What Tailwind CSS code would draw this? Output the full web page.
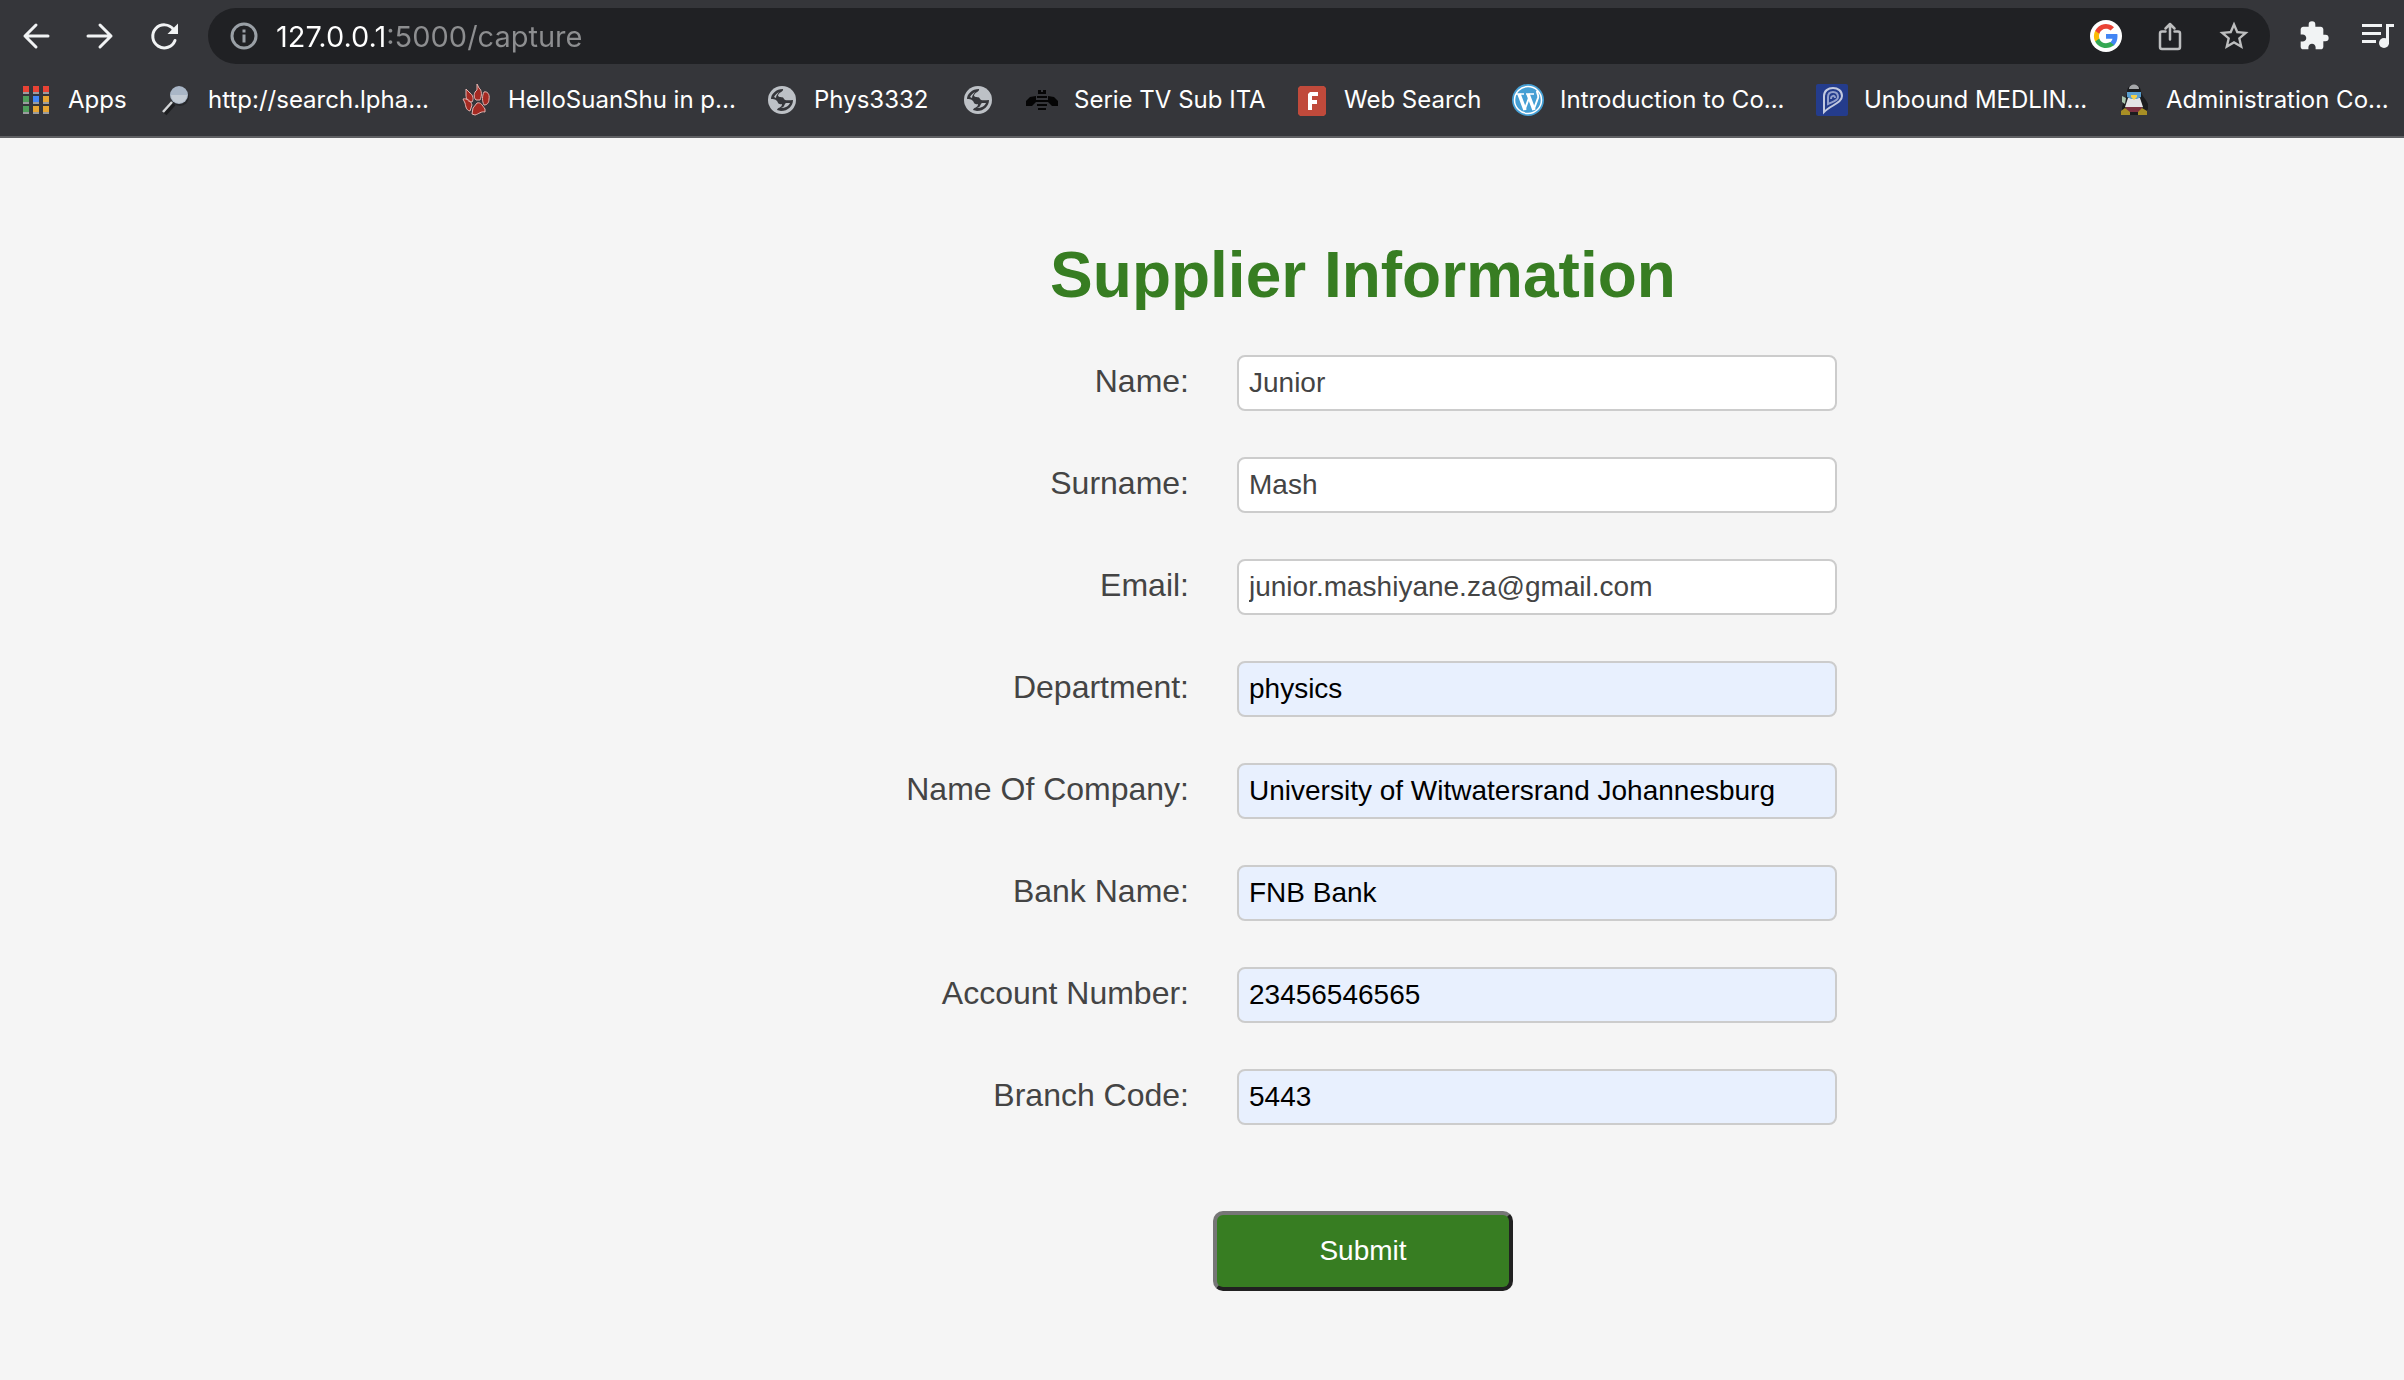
<!DOCTYPE html>
<html lang="en">
<head>
<meta charset="utf-8">
<title>Supplier Information</title>
<script src="https://cdn.jsdelivr.net/npm/@tailwindcss/browser@4"></script>
</head>
<body class="min-h-screen overflow-x-hidden bg-[#f5f5f5] font-['Liberation_Sans',Arial,sans-serif]">

<header class="border-b-2 border-[#5f6063] bg-[#35363a] pt-2 font-[Inter,sans-serif] text-white">
  <div class="flex h-14 items-center pl-5">
    <button aria-label="Back" class="mr-8 size-8 shrink-0">
      <svg viewBox="0 0 32 32" class="size-8" fill="none" stroke="#f1f3f4" stroke-width="3" stroke-linecap="round" stroke-linejoin="round"><path d="M28 16H5M16 5 5 16l11 11"/></svg>
    </button>
    <button aria-label="Forward" class="mr-8 size-8 shrink-0">
      <svg viewBox="0 0 32 32" class="size-8" fill="none" stroke="#f1f3f4" stroke-width="3" stroke-linecap="round" stroke-linejoin="round"><path d="M4 16h23M16 5l11 11-11 11"/></svg>
    </button>
    <button aria-label="Reload" class="mr-7 size-8 shrink-0">
      <svg viewBox="0 0 32 32" class="size-8" fill="none" stroke="#f1f3f4" stroke-width="3" stroke-linecap="round"><path d="M25.500 9.500A11.500 11.500 0 1 0 27 20.500"/><path d="M30 3.500V14H19.500z" fill="#f1f3f4" stroke="none"/></svg>
    </button>
    <div class="flex h-14 min-w-0 grow items-center rounded-full bg-[#202124] pl-[22px]">
      <svg viewBox="0 0 28 28" class="mr-[18px] size-7 shrink-0" fill="none" stroke="#9aa0a6" stroke-width="3"><circle cx="14" cy="14" r="12"/><path d="M14 12.500v8M14 7.500v3"/></svg>
      <input aria-label="Address" value="127.0.0.1:5000/capture" class="h-14 min-w-0 grow bg-[linear-gradient(90deg,#fff_112px,#8d8e90_112px)] bg-clip-text text-[29px] text-transparent outline-none">
      <button aria-label="Google" class="mr-8 size-8 shrink-0">
        <svg viewBox="0 0 32 32" class="size-8"><circle cx="16" cy="16" r="16" fill="#fff"/><g transform="translate(4 4)"><path fill="#4285f4" d="M23.500 12.300c0-.9-.1-1.500-.2-2.200H12v4.600h6.500c-.3 1.500-1.200 2.800-2.500 3.700v3h4c2.300-2.200 3.500-5.300 3.500-9.100z"/><path fill="#34a853" d="M12 24c3.200 0 6-1.100 8-2.900l-4-3c-1.100.7-2.500 1.200-4 1.200-3.100 0-5.800-2.100-6.700-4.900H1.200v3.100C3.200 21.400 7.300 24 12 24z"/><path fill="#fbbc05" d="M5.300 14.400a7.200 7.200 0 0 1 0-4.600V6.700H1.200a12 12 0 0 0 0 10.800z"/><path fill="#ea4335" d="M12 4.800c1.800 0 3.300.6 4.600 1.800L20 3.200A12 12 0 0 0 1.200 6.700l4.100 3.100c.9-2.900 3.600-5 6.700-5z"/></g></svg>
      </button>
      <button aria-label="Share" class="mr-8 size-8 shrink-0">
        <svg viewBox="0 0 32 32" class="size-8" fill="none" stroke="#bdbebf" stroke-width="2.500" stroke-linejoin="round" stroke-linecap="round"><path d="M11.500 11.500H8a2 2 0 0 0-2 2V27a2 2 0 0 0 2 2h16a2 2 0 0 0 2-2V13.500a2 2 0 0 0-2-2h-3.500M16 19.500V4M11.500 8.500 16 4l4.500 4.500"/></svg>
      </button>
      <button aria-label="Bookmark this page" class="mr-5 size-8 shrink-0">
        <svg viewBox="1 1 22 22" class="size-8" fill="#bdbebf"><path d="M22 9.240l-7.190-.62L12 2 9.190 8.630 2 9.240l5.460 4.730L5.820 21 12 17.270 18.180 21l-1.630-7.030L22 9.240zM12 15.400l-3.760 2.270 1-4.280-3.320-2.880 4.380-.38L12 6.100l1.710 4.040 4.380.38-3.320 2.880 1 4.280L12 15.400z"/></svg>
      </button>
    </div>
    <button aria-label="Extensions" class="ml-7 size-8 shrink-0">
      <svg viewBox="0 0 24 24" class="size-8" fill="#f1f3f4"><path d="M20.500 11H19V7c0-1.100-.9-2-2-2h-4V3.500a2.500 2.500 0 0 0-5 0V5H4c-1.100 0-1.990.9-1.990 2v3.800H3.500c1.490 0 2.700 1.210 2.700 2.700s-1.210 2.700-2.700 2.700H2V20c0 1.100.9 2 2 2h3.800v-1.500c0-1.490 1.210-2.700 2.700-2.700 1.490 0 2.700 1.210 2.700 2.700V22H17c1.100 0 2-.9 2-2v-4h1.500a2.500 2.500 0 0 0 0-5z"/></svg>
    </button>
    <button aria-label="Media controls" class="mr-2.5 ml-7 h-8 w-9 shrink-0">
      <svg viewBox="0 0 36 32" class="h-8 w-9" fill="none" stroke="#f1f3f4" stroke-width="3"><path d="M4 5.500h20M4 13.500h19M4 21.500h14M29.500 24V5.500H36"/><circle cx="26" cy="23" r="5" fill="#f1f3f4" stroke="none"/></svg>
    </button>
  </div>

  <nav aria-label="Bookmarks" class="flex h-[72px] items-start overflow-hidden pt-5 pl-5 text-2xl leading-8 whitespace-nowrap">
    <a href="#" class="flex w-[140px] shrink-0 gap-4">
      <svg viewBox="0 0 32 32" class="size-8 shrink-0"><path fill="#9a9c9e" d="M3 8h6v2H3zM13 8h6v2h-6zM23 8h6v2h-6zM3 18h6v2H3zM13 18h6v2h-6zM23 18h6v2h-6zM3 28h6v2H3zM13 28h6v2h-6zM23 28h6v2h-6z"/><path fill="#e94335" d="M3 2h6v6H3zM13 2h6v6h-6zM23 2h6v6h-6z"/><path fill="#4f9f5b" d="M3 12h6v6H3zM3 22h6v6H3z"/><path fill="#4285f4" d="M13 12h6v6h-6z"/><path fill="#e8a632" d="M23 12h6v6h-6zM13 22h6v6h-6zM23 22h6v6h-6z"/></svg>
      Apps</a>
    <a href="#" class="flex w-[300px] shrink-0 gap-4">
      <svg viewBox="0 0 32 32" class="size-8 shrink-0"><path d="M5 30 14 20" stroke="#1d1e20" stroke-width="4"/><circle cx="20" cy="13" r="9" fill="#27282b"/><path d="M3 28 12 18" stroke="#d4d6d8" stroke-width="2.500"/><circle cx="19" cy="11" r="9" fill="#a9b6c6"/><path d="M11 11a8 8 0 0 0 16 0z" fill="#c3cbd4"/></svg>
      http://search.lpha...</a>
    <a href="#" class="flex w-[306px] shrink-0 gap-4">
      <svg viewBox="0 0 32 32" class="size-8 shrink-0" fill="#a52a22" stroke="#e3b5b2" stroke-width="1"><path d="M17 0l2 4c3 2 3 8 1 12h-4c-3-3-2-8 1-10zM6 5l4 4c3 2 4 6 2 9-4 0-6-3-6-7zM24 8c3-1 6 2 5 7 0 4-2 6-5 6-2-4-2-9 0-13zM3 15c4-1 8 2 9 6l-2 6c-4-1-4-4-5-8zM17 19c4-1 5 2 8 6v3c-4-1-6 2-10 3l-3-1 1-6z"/></svg>
      HelloSuanShu in p...</a>
    <a href="#" class="flex w-[196px] shrink-0 gap-4">
      <svg viewBox="0 0 32 32" class="size-8 shrink-0"><circle cx="16" cy="16" r="14" fill="#bdc1c6"/><path d="M5 15C5 10 10 5 17 5c1 3-5 3-5 7 2 2 5 0 6 3 1 2 5 1 9 1 0 6-5 11-12 11l-4-1c1-3 5-2 5-6-4 1-4-2-5-3-2-2-4-2-6-2z" fill="#35363a"/><path d="M8 13c1-2 3-4 5-5-1 2-3 3-3 6zM15 24c4-1 3-4 5-5h4c-1 3-5 5-9 5z" fill="#bdc1c6"/></svg>
      Phys3332</a>
    <a href="#" aria-label="Untitled bookmark" class="flex w-16 shrink-0">
      <svg viewBox="0 0 32 32" class="size-8 shrink-0"><circle cx="16" cy="16" r="14" fill="#bdc1c6"/><path d="M5 15C5 10 10 5 17 5c1 3-5 3-5 7 2 2 5 0 6 3 1 2 5 1 9 1 0 6-5 11-12 11l-4-1c1-3 5-2 5-6-4 1-4-2-5-3-2-2-4-2-6-2z" fill="#35363a"/><path d="M8 13c1-2 3-4 5-5-1 2-3 3-3 6zM15 24c4-1 3-4 5-5h4c-1 3-5 5-9 5z" fill="#bdc1c6"/></svg>
    </a>
    <a href="#" class="flex w-[270px] shrink-0 gap-4">
      <svg viewBox="0 0 32 32" class="size-8 shrink-0" fill="#050505"><path d="M12 6h3v2h2V6h3v4h-8zM11 12h10v2H11zM10 16h12v2H10zM11 20h10v2H11zM12 24h8v2h-8zM10 12v6l-4 4H0v-5l4-4zM22 12v6l4 4h6v-5l-4-4z"/></svg>
      Serie TV Sub ITA</a>
    <a href="#" class="flex w-[216px] shrink-0 gap-4">
      <svg viewBox="0 0 32 32" class="size-8 shrink-0"><path d="M4 2h24l2 2v26l-2 2H4l-2-2V4z" fill="#c04a3b"/><path d="M12 26V10l2-2h8v4h-6v4h5v4h-5v6z" fill="#fff"/></svg>
      Web Search</a>
    <a href="#" class="flex w-[304px] shrink-0 gap-4">
      <svg viewBox="0 0 32 32" class="size-8 shrink-0"><circle cx="16" cy="16" r="16" fill="#459fd4"/><circle cx="16" cy="16" r="13.500" fill="none" stroke="#fff" stroke-width="1.500"/><path d="M4 10h8M14 10h8" stroke="#fff" stroke-width="1.500"/><path d="M7 10l6 16M16 10l6 16" stroke="#fff" stroke-width="3.500"/><path d="M12.500 26 17 14M21.500 26 26 14c1-3-1-4-1-7" fill="none" stroke="#fff" stroke-width="2"/></svg>
      Introduction to Co...</a>
    <a href="#" class="flex w-[302px] shrink-0 gap-4">
      <svg viewBox="0 0 32 32" class="size-8 shrink-0" fill="none"><rect width="32" height="32" rx="2" fill="#243c8c"/><path d="M8 28V12c0-5 4-8 9-8s9 3 9 8c0 7-11 9-18 16z" stroke="#c3cae0" stroke-width="2"/><path d="M12 20v-7c0-3 2-5 5-5s5 2 5 5c0 4-6 5-10 7zM15 15c0-4 4-4 4-1" stroke="#93a0cc" stroke-width="2"/></svg>
      Unbound MEDLIN...</a>
    <a href="#" class="flex shrink-0 gap-4">
      <svg viewBox="0 0 32 32" class="size-8 shrink-0"><path d="M9 8c0-10 14-10 14 0 1 4 5 7 7 12v5l-4 6H6l-2-6c0-5 4-9 5-17z" fill="#1b1c1e"/><path d="M11 5c0-6 10-6 10 0z" fill="#a5a7aa"/><path d="M10 14h12l3 9c-4 2-14 2-18 0z" fill="#e4e4e6"/><path d="M9 8h14v5l-4 2h-6l-4-2z" fill="#5a9fd0"/><path d="M13 11h6v2l-3 3-3-3z" fill="#f3cf4a"/><path d="M4 12l4 2-1 6-3-2z" fill="#a9c4ad"/><path d="M8 23h16v5H8z" fill="#7b3040"/><path d="M3 27l4-3 5 4v3H3zM20 28l4-4 5 3v4h-9z" fill="#a88f25"/></svg>
      Administration Co...</a>
  </nav>
</header>

<main class="flex flex-col items-center pt-[101px] pb-22 pl-[322px]">
  <h1 class="text-[64px] leading-[72px] font-bold text-[#377d22]">Supplier Information</h1>
  <form class="mt-11 flex flex-col items-center text-[#444]">
    <div class="grid grid-cols-[300px_600px] gap-x-12 gap-y-[46px] text-right text-[32px] leading-[52px]">
      <label for="name">Name:</label>
      <input id="name" value="Junior" class="h-14 rounded-lg border-2 border-[#ccc] bg-white px-2.5 text-[28px]">
      <label for="surname">Surname:</label>
      <input id="surname" value="Mash" class="h-14 rounded-lg border-2 border-[#ccc] bg-white px-2.5 text-[28px]">
      <label for="email">Email:</label>
      <input id="email" type="email" value="junior.mashiyane.za@gmail.com" class="h-14 rounded-lg border-2 border-[#ccc] bg-white px-2.5 text-[28px]">
      <label for="department">Department:</label>
      <input id="department" value="physics" class="h-14 rounded-lg border-2 border-[#ccc] bg-[#e8f0fe] px-2.5 text-[28px] text-black">
      <label for="company">Name Of Company:</label>
      <input id="company" value="University of Witwatersrand Johannesburg" class="h-14 rounded-lg border-2 border-[#ccc] bg-[#e8f0fe] px-2.5 text-[28px] text-black">
      <label for="bank">Bank Name:</label>
      <input id="bank" value="FNB Bank" class="h-14 rounded-lg border-2 border-[#ccc] bg-[#e8f0fe] px-2.5 text-[28px] text-black">
      <label for="account">Account Number:</label>
      <input id="account" value="23456546565" class="h-14 rounded-lg border-2 border-[#ccc] bg-[#e8f0fe] px-2.5 text-[28px] text-black">
      <label for="branch">Branch Code:</label>
      <input id="branch" value="5443" class="h-14 rounded-lg border-2 border-[#ccc] bg-[#e8f0fe] px-2.5 text-[28px] text-black">
    </div>
    <button type="button" class="mt-[86px] h-20 w-[300px] rounded-[10px] border-4 border-t-[#767676] border-r-[#212121] border-b-[#212121] border-l-[#767676] bg-[#377d22] text-[28px] text-white">Submit</button>
  </form>
</main>
</body>
</html>
